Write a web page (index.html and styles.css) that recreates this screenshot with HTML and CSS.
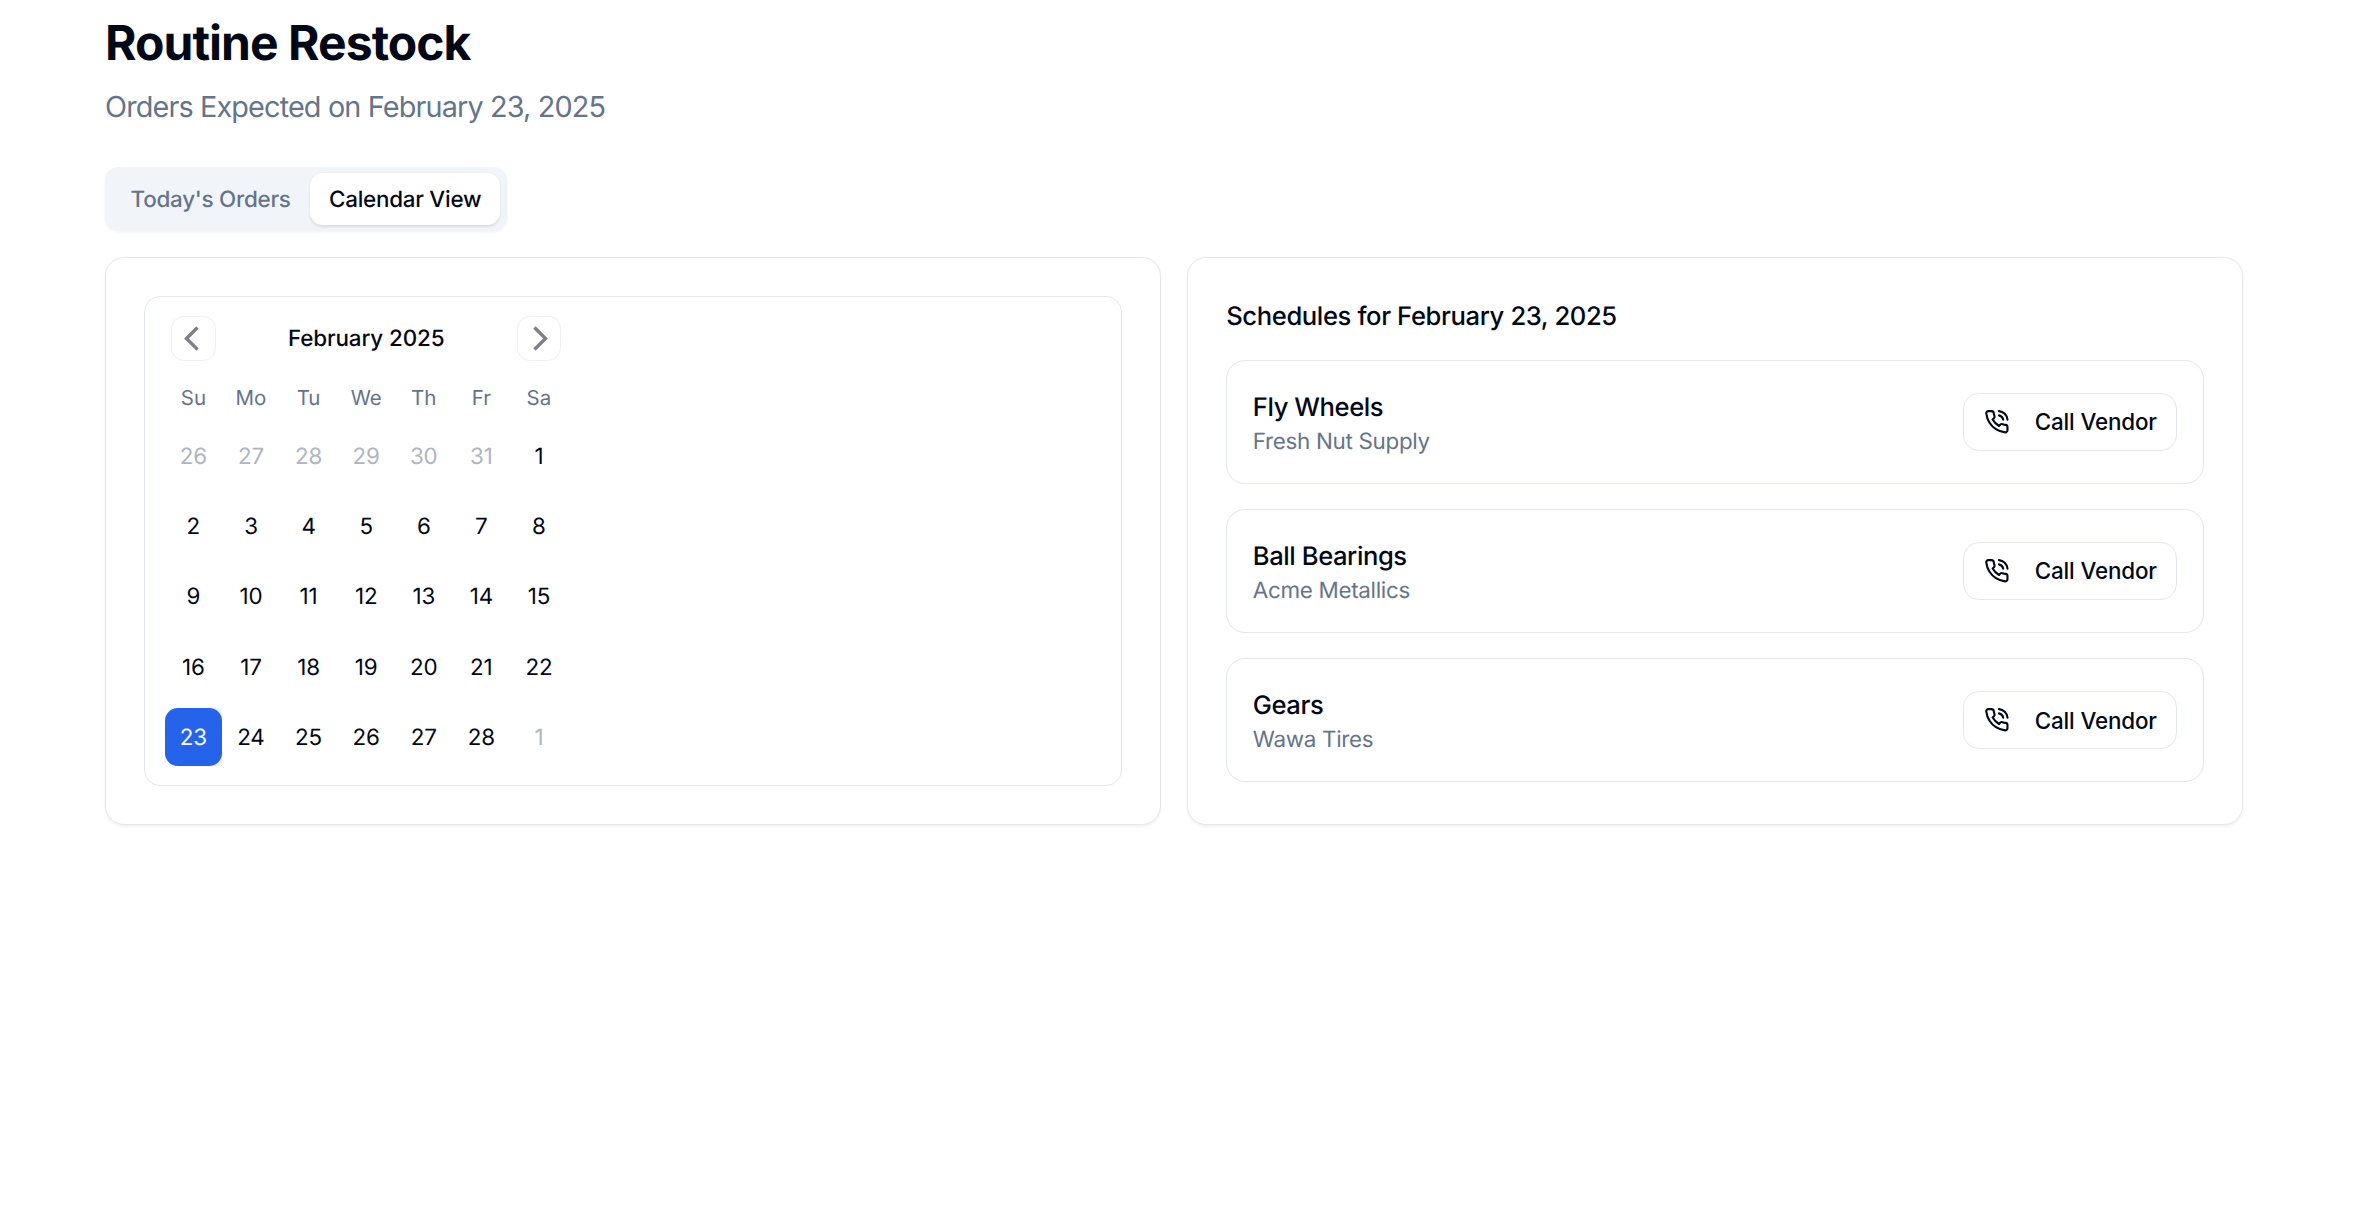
FILE: index.html
```html
<!DOCTYPE html>
<html lang="en">
<head>
<meta charset="utf-8">
<title>Routine Restock</title>
<link rel="stylesheet" href="styles.css">
</head>
<body>
<svg class="defs" aria-hidden="true"><defs>
<symbol id="phone" viewBox="0 0 24 24"><path d="M22 16.92v3a2 2 0 0 1-2.18 2 19.79 19.79 0 0 1-8.63-3.07 19.5 19.5 0 0 1-6-6 19.79 19.79 0 0 1-3.07-8.67A2 2 0 0 1 4.11 2h3a2 2 0 0 1 2 1.72 12.84 12.84 0 0 0 .7 2.81 2 2 0 0 1-.45 2.11L8.09 9.91a16 16 0 0 0 6 6l1.27-1.27a2 2 0 0 1 2.11-.45 12.84 12.84 0 0 0 2.81.7A2 2 0 0 1 22 16.92z"/><path d="M14.05 2a9 9 0 0 1 8 7.94"/><path d="M14.05 6A5 5 0 0 1 18 10"/></symbol>
</defs></svg>
<main class="page">
  <h1 class="title">Routine Restock</h1>
  <p class="subtitle">Orders Expected on February 23, 2025</p>
  <div class="tabs">
    <div class="tab">Today's Orders</div>
    <div class="tab tab-active">Calendar View</div>
  </div>
  <div class="panels">
    <section class="card">
      <div class="calendar">
        <div class="cal-head">
          <button class="nav"><svg class="chev chev-left" viewBox="0 0 16 25"><path d="M13.5 1.5 2.5 12.5 13.5 23.5"/></svg></button>
          <div class="month">February 2025</div>
          <button class="nav"><svg class="chev chev-right" viewBox="0 0 16 25"><path d="M2.5 1.5 13.5 12.5 2.5 23.5"/></svg></button>
        </div>
        <div class="weekdays">
          <span>Su</span><span>Mo</span><span>Tu</span><span>We</span><span>Th</span><span>Fr</span><span>Sa</span>
        </div>
        <div class="days">
          <span class="day out">26</span><span class="day out">27</span><span class="day out">28</span><span class="day out">29</span><span class="day out">30</span><span class="day out">31</span><span class="day">1</span>
          <span class="day">2</span><span class="day">3</span><span class="day">4</span><span class="day">5</span><span class="day">6</span><span class="day">7</span><span class="day">8</span>
          <span class="day">9</span><span class="day">10</span><span class="day">11</span><span class="day">12</span><span class="day">13</span><span class="day">14</span><span class="day">15</span>
          <span class="day">16</span><span class="day">17</span><span class="day">18</span><span class="day">19</span><span class="day">20</span><span class="day">21</span><span class="day">22</span>
          <span class="day-wrap"><span class="day selected">23</span></span><span class="day">24</span><span class="day">25</span><span class="day">26</span><span class="day">27</span><span class="day">28</span><span class="day out">1</span>
        </div>
      </div>
    </section>
    <section class="card">
      <h2 class="sched-title">Schedules for February 23, 2025</h2>
      <div class="list">
        <article class="item">
          <div class="item-text"><div class="item-name">Fly Wheels</div><div class="item-sub">Fresh Nut Supply</div></div>
          <button class="call"><svg class="phone"><use href="#phone"/></svg>Call Vendor</button>
        </article>
        <article class="item">
          <div class="item-text"><div class="item-name">Ball Bearings</div><div class="item-sub">Acme Metallics</div></div>
          <button class="call"><svg class="phone"><use href="#phone"/></svg>Call Vendor</button>
        </article>
        <article class="item">
          <div class="item-text"><div class="item-name">Gears</div><div class="item-sub">Wawa Tires</div></div>
          <button class="call"><svg class="phone"><use href="#phone"/></svg>Call Vendor</button>
        </article>
      </div>
    </section>
  </div>
</main>
</body>
</html>
```
FILE: styles.css
```css
* { box-sizing: border-box; }
html, body { margin: 0; background: #fff; }
body {
  font-family: Inter, "Liberation Sans", sans-serif;
  color: #020817;
  height: 1206px;
  overflow: hidden;
  text-rendering: geometricPrecision;
}
.defs { display: none; }
.page { padding: 14px 119px 0 105px; }
.title {
  margin: 0;
  font-size: 48px;
  line-height: 57.6px;
  font-weight: 700;
  letter-spacing: -0.95px;
}
.subtitle {
  margin: 13.6px 0 0;
  font-size: 28.8px;
  line-height: 44.8px;
  letter-spacing: -0.85px;
  color: #64748b;
}
.tabs {
  display: inline-flex;
  margin-top: 37px;
  padding: 6.4px;
  height: 64px;
  background: #f1f5f9;
  border-radius: 14px;
  box-shadow: 0 1px 3px rgba(0,0,0,.06);
  vertical-align: top;
}
.tab {
  display: flex;
  align-items: center;
  padding: 1px 19.2px 0;
  height: 51.2px;
  font-size: 22.4px;
  font-weight: 450;
  letter-spacing: -0.25px;
  color: #64748b;
  border-radius: 12.8px;
}
.tab-active {
  background: #fff;
  color: #020817;
  box-shadow: 0 1.6px 3px rgba(0,0,0,.1);
}
.panels {
  display: grid;
  grid-template-columns: 1fr 1fr;
  gap: 25.6px;
  margin-top: 25.6px;
}
.card {
  padding: 38.4px;
  background: #fff;
  border: 1px solid #e4e7ec;
  border-radius: 19.2px;
  box-shadow: 0 1.6px 3px rgba(0,0,0,.06);
}
.calendar {
  padding: 19.2px;
  border: 1px solid #e4e7ec;
  border-radius: 16px;
}
.cal-head {
  display: flex;
  align-items: center;
  justify-content: space-between;
  width: 403.2px;
  padding: 0 6.4px;
}
.nav {
  display: flex;
  align-items: center;
  justify-content: center;
  width: 44.8px;
  height: 44.8px;
  padding: 0;
  background: #fff;
  border: 1px solid #eef0f3;
  border-radius: 12.8px;
}
.chev {
  width: 16px;
  height: 25px;
  fill: none;
  stroke: #7f7f87;
  stroke-width: 3.4;
}
.chev-left { margin-right: 3px; }
.chev-right { margin-left: 2px; }
.month {
  font-size: 22.4px;
  font-weight: 450;
  letter-spacing: -0.12px;
}
.weekdays {
  display: grid;
  grid-template-columns: repeat(7, 57.6px);
  margin-top: 20.8px;
  height: 32px;
  align-items: center;
  font-size: 20.48px;
  font-weight: 380;
  color: #64748b;
  text-align: center;
}
.days {
  display: grid;
  grid-template-columns: repeat(7, 57.6px);
  grid-auto-rows: 57.6px;
  row-gap: 12.8px;
  margin-top: 12.8px;
  font-size: 22.4px;
  font-weight: 370;
  letter-spacing: -0.15px;
}
.day {
  display: flex;
  align-items: center;
  justify-content: center;
  height: 100%;
  padding-top: 1.5px;
}
.out { color: #b0b5bf; }
.day-wrap {
  background: #eef2fc;
  border-radius: 12.8px 0 0 12.8px;
}
.selected {
  background: #2563eb;
  color: #f8fafc;
  border-radius: 12.8px;
}
.sched-title {
  margin: 0;
  padding-top: 2px;
  height: 38.4px;
  font-size: 25.6px;
  line-height: 38.4px;
  font-weight: 450;
  letter-spacing: -0.38px;
}
.list {
  display: flex;
  flex-direction: column;
  gap: 25.6px;
  margin-top: 25.6px;
}
.item {
  display: flex;
  align-items: center;
  justify-content: space-between;
  height: 123.6px;
  padding: 0 25.6px;
  border: 1px solid #e4e7ec;
  border-radius: 19.2px;
}
.item-text { padding-top: 4px; }
.item-name {
  font-size: 25.6px;
  line-height: 36px;
  font-weight: 450;
  letter-spacing: -0.42px;
}
.item-sub {
  font-size: 22.4px;
  line-height: 32px;
  font-weight: 380;
  letter-spacing: -0.3px;
  color: #64748b;
}
.call {
  display: flex;
  align-items: center;
  gap: 25.6px;
  height: 57.6px;
  padding: 0 19.2px;
  font-family: inherit;
  font-size: 22.4px;
  font-weight: 450;
  letter-spacing: -0.15px;
  color: #020817;
  background: #fff;
  border: 1px solid #e4e7ec;
  border-radius: 16px;
}
.phone {
  width: 25.6px;
  height: 25.6px;
  fill: none;
  stroke: #020817;
  stroke-width: 2;
  stroke-linecap: round;
  stroke-linejoin: round;
  flex: none;
}
```
